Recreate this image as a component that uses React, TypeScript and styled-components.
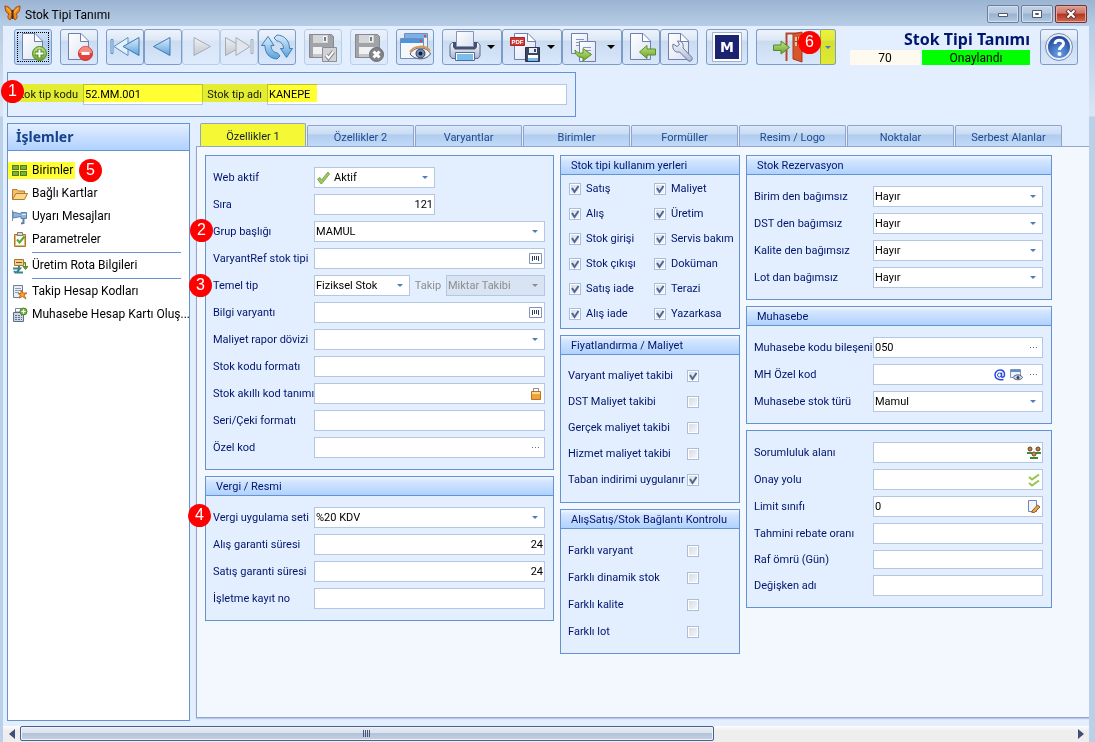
import React, { useId, useState } from 'react';
import styled, { createGlobalStyle, css } from 'styled-components';

const FORM_FONT = 'Roboto, Tahoma, "Noto Sans", sans-serif';
const UI_FONT = 'Roboto, "Segoe UI", sans-serif';
const HEAD_FONT = '"Noto Sans", "Segoe UI", sans-serif';
const LINE = '#6593cf';
const FIELD_LINE = '#b3c7e1';
const NAVY = '#00156e';

const GlobalStyle = createGlobalStyle`
  * { box-sizing: border-box; }
  body { margin: 0; background: #bcd2ea; }
  button, input, select { font: inherit; color: inherit; }
`;

/* ---------- window frame ---------- */

const Window = styled.div`
  display: flex;
  flex-direction: column;
  min-height: 100vh;
  font: 11px/14px ${FORM_FONT};
  color: ${NAVY};
  background: linear-gradient(#9ab4d3 0, #b6cce5 26px, #d9e6f5 116px, #bad0e9 117px);
`;

const TitleBar = styled.header`
  display: flex;
  align-items: center;
  height: 26px;
  padding: 0 8px 0 4px;
  background: linear-gradient(#9bb4d2, #b7cde6);
`;

const WindowTitle = styled.h1`
  flex: 1;
  margin: 3px 0 0 4px;
  font: 400 12px/16px ${UI_FONT};
  color: #000;
`;

const Controls = styled.div`
  display: flex;
  gap: 2px;
  margin-top: 2px;
`;

const ControlButton = styled.button<{ $close?: boolean }>`
  display: flex;
  align-items: center;
  justify-content: center;
  width: 32px;
  height: 18px;
  padding: 0;
  border: 1px solid ${p => (p.$close ? '#7a2f30' : '#6a7f9c')};
  border-radius: 2px;
  box-shadow: inset 0 0 0 1px ${p => (p.$close ? '#e3a79f' : '#d3dfee')};
  background: ${p =>
    p.$close
      ? 'linear-gradient(#dc9f96 0, #cf7468 45%, #b5321f 50%, #cf6a50 100%)'
      : 'linear-gradient(#c3d3e6 0, #b3c6de 45%, #98b1cf 50%, #b4cae4 100%)'};
`;

const Client = styled.div`
  display: flex;
  flex: 1;
  flex-direction: column;
  margin: 0 6px 0 3px;
  background: #e3eeff;
`;

/* ---------- toolbar ---------- */

const Toolbar = styled.div`
  display: flex;
  align-items: flex-start;
  gap: 8px;
  padding: 3px 11px 7px;
`;

const ButtonGroup = styled.div`
  display: flex;
`;

const ToolButton = styled.button<{ $width?: number; $active?: boolean }>`
  display: flex;
  align-items: center;
  justify-content: center;
  width: ${p => p.$width ?? 38}px;
  height: 36px;
  padding: 0;
  border: 1px solid #7d9dc9;
  border-radius: 3px;
  background: ${p =>
    p.$active
      ? 'linear-gradient(#cfe2f8 0, #c3d9f3 30%, #aecbec 34%, #c2dcf8 100%)'
      : 'linear-gradient(#edf3fb 0, #dde8f5 30%, #cbdbef 32%, #d8e7fb 100%)'};
  &:disabled {
    border-color: #b9cde8;
    background: linear-gradient(#e9f1fc 0, #e1ebf9 30%, #d8e5f6 32%, #deebfd 100%);
  }
`;

const FocusRing = styled.span`
  display: flex;
  align-items: center;
  justify-content: center;
  width: 32px;
  height: 30px;
  outline: 1px dotted #000;
  outline-offset: -1px;
`;

const MenuArrow = styled.span`
  width: 0;
  margin-left: 6px;
  border: 4px solid transparent;
  border-top-color: #000;
  border-bottom: 0;
`;

const ExitSplit = styled.div`
  position: relative;
  display: flex;
`;

const ExitMain = styled(ToolButton)`
  width: 64px;
  border-right: 0;
  border-radius: 3px 0 0 3px;
`;

const ExitMenu = styled(ToolButton)`
  width: 16px;
  border-left-color: #a3a93a;
  border-radius: 0 3px 3px 0;
  background: linear-gradient(#edf23a 0, #e2e93a 30%, #d5df32 32%, #dfea34 100%);
`;

const Status = styled.div`
  display: flex;
  flex: 0 1 180px;
  flex-direction: column;
  margin: 0 2px 0 auto;
  font: 12px/16px ${UI_FONT};
  color: #000;
  text-align: center;
`;

const StatusTitle = styled.strong`
  height: 21px;
  font: 700 16px/21px ${HEAD_FONT};
  color: ${NAVY};
  text-align: right;
  white-space: nowrap;
`;

const StatusRow = styled.div`
  display: grid;
  grid-template-columns: 70fr 108fr;
  gap: 2px;
`;

const StatusCell = styled.span<{ $bg: string }>`
  height: 15px;
  background: ${p => p.$bg};
`;

/* ---------- numbered markers ---------- */

const Marker = styled.span<{ $x: number; $y: number }>`
  position: absolute;
  z-index: 2;
  left: ${p => p.$x}px;
  top: ${p => p.$y}px;
  width: 23px;
  height: 23px;
  border-radius: 50%;
  font: 16px/22px "Liberation Sans", Arial, sans-serif;
  color: #fff;
  text-align: center;
  background: #f00;
`;

/* ---------- record header ---------- */

const RecordHeader = styled.section`
  position: relative;
  display: flex;
  align-items: center;
  width: 52%;
  min-width: 569px;
  height: 45px;
  margin: 0 0 6px 4px;
  padding: 0 8px 0 6px;
  border: 1px solid ${LINE};
`;

const RecordLabel = styled.label<{ $width: number }>`
  flex: 0 0 ${p => p.$width}px;
  padding-right: 5px;
  color: #1a1a1a;
  text-align: right;
  white-space: nowrap;
`;

const Highlight = styled.span`
  position: absolute;
  left: 6px;
  top: 11px;
  width: 303px;
  height: 18px;
  background: #ffff33;
  mix-blend-mode: multiply;
  pointer-events: none;
`;

/* ---------- sidebar ---------- */

const Main = styled.main`
  display: flex;
  flex: 1;
  gap: 6px;
  padding: 0 0 5px 4px;
`;

const Sidebar = styled.nav`
  flex: 0 0 183px;
  min-width: 0;
  border: 1px solid ${LINE};
  background: #fff;
`;

const SidebarTitle = styled.h2`
  height: 27px;
  margin: 0 0 8px;
  padding-left: 8px;
  border-bottom: 1px solid ${LINE};
  font: 700 14px/26px ${HEAD_FONT};
  color: #15428b;
  background: linear-gradient(#e3efff, #c9dfff 50%, #afd2ff);
`;

const SidebarList = styled.ul`
  margin: 0;
  padding: 0;
  list-style: none;
`;

const SidebarItem = styled.li<{ $ruled?: boolean }>`
  position: relative;
  height: ${p => (p.$ruled ? 26 : 23)}px;
  ${p =>
    p.$ruled &&
    css`
      &::after {
        content: '';
        display: block;
        height: 1px;
        margin: 0 8px 0 24px;
        background: ${LINE};
      }
    `}
`;

const SidebarLink = styled.a<{ $marked?: boolean }>`
  display: inline-flex;
  align-items: center;
  gap: 4px;
  height: 17px;
  margin: 3px 0;
  padding: 0 2px 0 4px;
  font: 12px/19px ${UI_FONT};
  color: #000;
  text-decoration: none;
  white-space: nowrap;
  background: ${p => (p.$marked ? '#ffff33' : 'none')};
`;

/* ---------- tabs ---------- */

const TabArea = styled.div`
  display: flex;
  flex: 1;
  flex-direction: column;
  min-width: 0;
  margin-bottom: 3px;
`;

const TabStrip = styled.div`
  display: flex;
  align-items: flex-end;
  gap: 1px;
  height: 23px;
  padding-left: 4px;
`;

const Tab = styled.button<{ $selected: boolean }>`
  flex: 0 1 ${p => (p.$selected ? 106 : 107)}px;
  min-width: 0;
  height: ${p => (p.$selected ? 23 : 21)}px;
  padding: 3px 0 0;
  border: 1px solid #8fa3cc;
  border-bottom: 0;
  border-radius: 2px 2px 0 0;
  color: ${p => (p.$selected ? '#10202c' : '#1f4a8c')};
  white-space: nowrap;
  background: ${p =>
    p.$selected
      ? '#f4f835'
      : 'linear-gradient(#dbe8f8 0, #c9dcf3 40%, #b0ccee 45%, #c0daf9 100%)'};
`;

const TabPanel = styled.div`
  display: grid;
  flex: 1;
  grid-template-columns: minmax(0, 349fr) minmax(0, 180fr) minmax(0, 306fr);
  align-items: start;
  gap: 6px;
  padding: 8px 37px 8px 8px;
  border: 1px solid #93a6cf;
  border-right: 0;
  box-shadow: 0 1px 1px #b5cbe9;
  background: #f3f8ff;
`;

const Column = styled.div`
  display: flex;
  flex-direction: column;
  gap: 6px;
`;

const Group = styled.section`
  border: 1px solid ${LINE};
  background: #e3eeff;
`;

const GroupTitle = styled.h3`
  height: 19px;
  margin: 0;
  padding-left: 10px;
  border-bottom: 1px solid ${LINE};
  font: inherit;
  line-height: 19px;
  background: linear-gradient(#f0f6ff 0, #d3e5ff 25%, #b0d2ff 100%);
`;

const Rows = styled.div`
  display: flex;
  flex-direction: column;
  gap: 6px;
  padding: 11px 8px 11px 7px;
`;

const Row = styled.div`
  position: relative;
  display: flex;
  align-items: center;
`;

const RowLabel = styled.label<{ $width: number }>`
  flex: 0 0 ${p => p.$width}px;
  min-width: 0;
  white-space: nowrap;
`;

const InlineLabel = styled.label`
  flex: 0 0 36px;
  text-align: center;
  color: #8d8d8d;
`;

const Field = styled.div<{ $width?: number; $disabled?: boolean; $short?: boolean }>`
  display: flex;
  flex: ${p => (p.$width ? `0 1 ${p.$width}px` : '1')};
  align-items: center;
  min-width: 0;
  height: ${p => (p.$short ? 19 : 21)}px;
  border: 1px solid ${FIELD_LINE};
  color: ${p => (p.$disabled ? '#8d8d8d' : '#000')};
  background: ${p => (p.$disabled ? '#d8e4f3' : '#fff')};
`;

const TextInput = styled.input<{ $right?: boolean }>`
  flex: 1;
  width: 0;
  min-width: 0;
  height: 100%;
  padding: 0 1px;
  border: 0;
  outline: 0;
  text-align: ${p => (p.$right ? 'right' : 'left')};
  background: none;
`;

const Select = styled.select`
  flex: 1;
  min-width: 0;
  width: 0;
  height: 100%;
  padding: 0 1px;
  border: 0;
  outline: 0;
  appearance: none;
  background: none;
  opacity: 1;
`;

const SelectArrow = styled.span<{ $disabled?: boolean }>`
  width: 0;
  margin: 0 6px;
  border: 3px solid transparent;
  border-top-color: ${p => (p.$disabled ? '#8d8d8d' : '#4f7db8')};
  border-bottom: 0;
`;

const IconButton = styled.button`
  display: flex;
  align-items: center;
  justify-content: center;
  width: 17px;
  height: 19px;
  padding: 0;
  border: 0;
  background: none;
`;

const LeadIcon = styled.span`
  display: flex;
  margin: 0 3px 0 2px;
`;

/* ---------- check boxes ---------- */

const CheckGrid = styled.div`
  display: grid;
  grid-template-columns: 85px 1fr;
  gap: 13px 0;
  padding: 8px 4px 8px 8px;
`;

const CheckLabel = styled.label`
  display: flex;
  align-items: center;
  gap: 5px;
  height: 12px;
  white-space: nowrap;
`;

const CheckRows = styled.div<{ $tight?: boolean }>`
  display: flex;
  flex-direction: column;
  gap: 6px;
  padding: ${p => (p.$tight ? '11px 8px 12px 7px' : '11px 8px 11px 7px')};
`;

const CheckRow = styled.label<{ $tight?: boolean }>`
  display: grid;
  grid-template-columns: 119px 12px;
  align-items: center;
  height: ${p => (p.$tight ? 20 : 21)}px;
  white-space: nowrap;
`;

const CheckCell = styled.span`
  display: grid;
  width: 12px;
  height: 12px;
  > * {
    grid-area: 1 / 1;
  }
`;

const CheckInput = styled.input`
  width: 12px;
  height: 12px;
  margin: 0;
  border: 1px solid #a9bedb;
  box-shadow: inset 0 0 0 1px #fff;
  appearance: none;
  background: linear-gradient(135deg, #d5dbe3, #f6f8fa);
  & + svg {
    visibility: hidden;
    pointer-events: none;
  }
  &:checked + svg {
    visibility: visible;
  }
`;

/* ---------- horizontal scroll bar ---------- */

const ScrollBar = styled.div`
  display: flex;
  height: 16px;
  background: linear-gradient(#fdfdfd, #eeeeee 30%);
`;

const ScrollTrack = styled.div`
  flex: 1;
`;

const ScrollButton = styled.button`
  display: flex;
  align-items: center;
  justify-content: center;
  width: 17px;
  height: 16px;
  padding: 0;
  border: 0;
  background: none;
`;

const ScrollThumb = styled.div`
  display: flex;
  align-items: center;
  justify-content: center;
  width: 66%;
  height: 15px;
  border: 1px solid #4b6090;
  border-radius: 2px;
  box-shadow: inset 0 0 0 1px #eef3fa;
  background: linear-gradient(#e6ebf1 0, #dbe3ec 45%, #b4c3d8 50%, #c3d1e4 100%);
`;

/* ---------- drawings ---------- */

const Gradients = () => (
  <svg width="0" height="0" style={{ position: 'absolute' }} aria-hidden="true">
    <defs>
      <linearGradient id="page" x1="0" y1="0" x2="1" y2="1">
        <stop offset="0" stopColor="#fff" />
        <stop offset="1" stopColor="#d9e2f3" />
      </linearGradient>
      <linearGradient id="blue" x1="0" y1="0" x2="0" y2="1">
        <stop offset="0" stopColor="#d9ecfb" />
        <stop offset="0.5" stopColor="#9cc8ec" />
        <stop offset="1" stopColor="#5ba0d8" />
      </linearGradient>
      <linearGradient id="grey" x1="0" y1="0" x2="0" y2="1">
        <stop offset="0" stopColor="#eef0f3" />
        <stop offset="1" stopColor="#c3c8d0" />
      </linearGradient>
      <linearGradient id="green" x1="0" y1="0" x2="0" y2="1">
        <stop offset="0" stopColor="#c4e27f" />
        <stop offset="1" stopColor="#6ba42d" />
      </linearGradient>
      <radialGradient id="help" cx="0.5" cy="0.8" r="0.8">
        <stop offset="0" stopColor="#6aa3ea" />
        <stop offset="1" stopColor="#1b3f98" />
      </radialGradient>
      <linearGradient id="metal" x1="0" y1="0" x2="0" y2="1">
        <stop offset="0" stopColor="#fbfcfe" />
        <stop offset="1" stopColor="#a9b6d0" />
      </linearGradient>
    </defs>
  </svg>
);

const Draw = ({ children, w = 32, h = w }: { children: React.ReactNode; w?: number; h?: number }) => (
  <svg width={w} height={h} viewBox={`0 0 ${w} ${h}`} fill="none" aria-hidden="true">
    {children}
  </svg>
);

const Page = () => (
  <>
    <path d="M5.500 2.500H18L25.500 10V28.500H5.500Z" fill="url(#page)" stroke="#6f7fae" />
    <path d="M17.500 3V10.500H25" fill="#fff" stroke="#6f7fae" />
  </>
);

const NewIcon = () => (
  <Draw>
    <Page />
    <circle cx="22.500" cy="22.500" r="7" fill="url(#green)" stroke="#4b8a1c" />
    <path d="M22.500 18V27M18 22.500H27" stroke="#4b8a1c" strokeWidth="4" />
    <path d="M22.500 18.500V26.500M18.500 22.500H26.500" stroke="#fff" strokeWidth="2" />
  </Draw>
);

const DeleteIcon = () => (
  <Draw>
    <Page />
    <circle cx="22.500" cy="22.500" r="7" fill="#e8403c" stroke="#c8302d" />
    <path d="M16 22a6.500 6.500 0 0 1 13 0Z" fill="#f58a84" />
    <path d="M18.500 22.500H26.500" stroke="#fff" strokeWidth="3" />
  </Draw>
);

const FirstIcon = () => (
  <Draw>
    <path d="M2 8.500H4V22.500H2Z" fill="#cfe5f8" stroke="#5a8fc4" />
    <path d="M19 6.500V24.500L5 15.500Z" fill="#e3f1fc" stroke="#5a8fc4" />
    <path d="M30 6.500V24.500L14 15.500Z" fill="url(#blue)" stroke="#3f78b5" />
  </Draw>
);

const PrevIcon = () => (
  <Draw>
    <path d="M23 6.500V24.500L6.500 15.500Z" fill="url(#blue)" stroke="#3f78b5" />
  </Draw>
);

const NextIcon = () => (
  <Draw>
    <path d="M9 6.500V24.500L25.500 15.500Z" fill="url(#grey)" stroke="#a5acb8" />
  </Draw>
);

const LastIcon = () => (
  <Draw>
    <path d="M2.500 6.500V24.500L18.500 15.500Z" fill="url(#grey)" stroke="#a5acb8" />
    <path d="M13 6.500V24.500L27 15.500Z" fill="#e2e6ec" stroke="#a5acb8" />
    <path d="M28 8.500H30V22.500H28Z" fill="#e8ebf0" stroke="#a5acb8" />
  </Draw>
);

const RefreshIcon = () => (
  <Draw>
    <path
      d="M7 5.500L13 14.500H10C10 18.500 12.500 21.500 16.500 22L19 25L16 28C8 27.500 4 22 4 14.500H0.500Z"
      fill="url(#blue)"
      stroke="#3d7fb8"
    />
    <path
      d="M25.500 26.500L19.500 17.500H22.500C22.500 13.500 20 10.500 16 10L13 7L16 4C24 4.500 28.500 10 28.500 17.500H31.500Z"
      fill="url(#blue)"
      stroke="#3d7fb8"
    />
  </Draw>
);

const Floppy = () => (
  <>
    <path d="M2.500 3.500H24.500L26.500 5.500V26.500H2.500Z" fill="#a0a3a7" stroke="#86898e" />
    <path d="M6 4H21V12H6Z" fill="#d3d5d9" />
    <path d="M16 5H20V11H16Z" fill="#f2f3f4" />
    <path d="M17 6H19V10H17Z" fill="#77797d" />
    <path d="M6 16H23V26H6Z" fill="#f0f1f2" />
    <path d="M6 23H23V26H6Z" fill="#c5c7ca" />
  </>
);

const SaveOkIcon = () => (
  <Draw>
    <Floppy />
    <path d="M15.500 16.500H29.500V30.500H15.500Z" fill="#d0d2d6" stroke="#8b8e93" />
    <path d="M19 24L21.500 27L26.500 20.500" stroke="#85888c" strokeWidth="4" />
    <path d="M19 24L21.500 27L26.500 20.500" stroke="#fff" strokeWidth="2" />
  </Draw>
);

const SaveCancelIcon = () => (
  <Draw>
    <Floppy />
    <circle cx="23.500" cy="23.500" r="7" fill="#818387" stroke="#6b6d71" />
    <path d="M20.500 20.500L26.500 26.500M26.500 20.500L20.500 26.500" stroke="#fff" strokeWidth="3" />
  </Draw>
);

const PreviewIcon = () => (
  <Draw>
    <path d="M5.500 2.500H28.500V22.500H5.500Z" fill="#eaf0f8" stroke="#6f8fc0" />
    <path d="M6 3H28V7H6Z" fill="#7db0e6" />
    <path d="M25 4H27V6H25Z" fill="#e0452f" />
    <path d="M1.500 7.500H24.500V27.500H1.500Z" fill="#f4f7fc" stroke="#6f8fc0" />
    <path d="M2 8H24V12H2Z" fill="#4f93da" />
    <path d="M21 9H23V11H21Z" fill="#e0452f" />
    <path d="M11 23C15 15 28 15 31.500 23C27 29.500 16 29.500 11 23Z" fill="#f2f3f7" stroke="#515a78" />
    <path d="M11 21C15 14 27 14 31 20" stroke="#d99a4a" strokeWidth="2" />
    <circle cx="21.500" cy="22.500" r="4.500" fill="#6f8cb5" stroke="#2f3b5c" />
    <circle cx="21.500" cy="22.500" r="2" fill="#151b30" />
  </Draw>
);

const PrinterIcon = () => (
  <Draw>
    <path d="M3 11.500H29L31 14V25L29 27.500H3L1 25V14Z" fill="url(#metal)" stroke="#596a94" />
    <path d="M4 11H28V16L26 18.500H6L4 16Z" fill="#45506f" />
    <path d="M7.500 0.500H24.500V15.500H7.500Z" fill="url(#page)" stroke="#8794b8" />
    <path d="M6.500 21.500H25.500V29.500H6.500Z" fill="#fff" stroke="#596a94" />
    <path d="M8 23H24V29H8Z" fill="#78bdec" />
  </Draw>
);

const PdfIcon = () => (
  <Draw>
    <path d="M5.500 2.500H19L26.500 10V28.500H5.500Z" fill="url(#page)" stroke="#6f7fae" />
    <path d="M18.500 3V10.500H26" fill="#fff" stroke="#6f7fae" />
    <path d="M1.500 6.500H15.500V14.500H1.500Z" fill="#cf3a36" stroke="#a92825" />
    <text x="8.500" y="13" fontSize="6" fontWeight="700" fill="#fff" textAnchor="middle" fontFamily="Liberation Sans">
      PDF
    </text>
    <path d="M16.500 16.500H30.500V30.500H16.500Z" fill="#3b4566" stroke="#2a3250" />
    <path d="M20 17H28V22H20Z" fill="#e8edf6" />
    <path d="M25 18H27V21H25Z" fill="#3b4566" />
    <path d="M19 24H29V30H19Z" fill="#fff" />
    <path d="M19 27H29V30H19Z" fill="#77b9ea" />
  </Draw>
);

const CopyIcon = () => (
  <Draw>
    <path d="M2.500 2.500H18.500V22.500H2.500Z" fill="url(#page)" stroke="#6f7fae" />
    <path d="M7 8.500H15M7 11.500H13M7 14.500H11" stroke="#8196c4" />
    <path d="M10.500 10.500H26.500V30.500H10.500Z" fill="url(#page)" stroke="#6f7fae" />
    <path d="M14 16.500H22M14 19.500H22M16 22.500H22" stroke="#8196c4" />
    <path
      d="M6 19C8 22 11 22.500 14 22V17.500L22.500 23.500L14 30V26.500C9 26.500 6 23.500 6 19Z"
      fill="url(#green)"
      stroke="#5b8c28"
    />
  </Draw>
);

const ImportIcon = () => (
  <Draw>
    <Page />
    <path d="M14.500 21L22 14.500V18H30.500V24H22V27.500Z" fill="url(#green)" stroke="#5b8c28" />
  </Draw>
);

const WrenchIcon = () => (
  <Draw>
    <Page />
    <path
      d="M10 13L14 15.500L16.500 13.500L14.500 10C19 10 21 13 20 17L29 26.500C30 29 27.500 31 25.500 30L16.500 21C12 22 9 18.500 10 13Z"
      fill="url(#metal)"
      stroke="#68779b"
    />
  </Draw>
);

const MIcon = () => (
  <Draw>
    <path d="M1.500 1.500H30.500V30.500H1.500Z" fill="#fff" stroke="#9fb0cf" />
    <path d="M4 4H28V28H4Z" fill="#1a2470" />
    <text x="16" y="21" fontSize="14" fontWeight="700" fill="#fff" textAnchor="middle" fontFamily="DejaVu Sans">
      M
    </text>
  </Draw>
);

const ExitIcon = () => (
  <Draw>
    <path d="M13.500 30V2.500H28" stroke="#b5482c" strokeWidth="2" />
    <path d="M20 3L29 1V31L20 28Z" fill="#d9552d" stroke="#a63b1c" />
    <path d="M22 6H27V15H22Z" fill="#e9c7a8" />
    <path d="M24.500 6V15M22 10.500H27" stroke="#a63b1c" />
    <path d="M0.500 14H8V10L16.500 16.500L8 23V19.500H0.500Z" fill="url(#green)" stroke="#4f8a2c" />
  </Draw>
);

const HelpIcon = () => (
  <Draw>
    <circle cx="16" cy="16" r="13.500" fill="#e8eefa" stroke="#7389b8" />
    <circle cx="16" cy="16" r="11" fill="url(#help)" />
    <path d="M12 13C12 8 20.500 8 20.500 12.500C20.500 15.500 16.500 15.500 16.500 19" stroke="#fff" strokeWidth="3" />
    <circle cx="16.500" cy="23" r="2" fill="#fff" />
  </Draw>
);

const ButterflyIcon = () => (
  <Draw w={17} h={16}>
    <path d="M1 1C5 1 8 5 8.500 8C9 5 12 1 16 1C16 5 15 8 12 9C14 11 13 14 11 15L8.500 10L6 15C4 14 3 11 5 9C2 8 1 5 1 1Z" fill="#f08a1c" stroke="#9c4a12" />
    <path d="M8.500 5V14" stroke="#4a2a18" strokeWidth="2" />
    <path d="M3 3L7 8M14 3L10 8" stroke="#ffc25a" />
  </Draw>
);

const UnitsIcon = () => (
  <Draw w={16}>
    {[3, 9].map(y =>
      [1, 9].map(x => (
        <rect key={`${x}-${y}`} x={x - 0.5} y={y - 0.5} width="6" height="4" fill="#7fb03f" stroke="#4e7d20" />
      ))
    )}
  </Draw>
);

const FolderIcon = () => (
  <Draw w={16}>
    <path d="M0.500 13.500V3.500H5L6.500 5H12.500V7" fill="#f0c070" stroke="#b57a2a" />
    <path d="M0.500 13.500L4 7.500H15.500L12.500 13.500Z" fill="#fbd78e" stroke="#b57a2a" />
  </Draw>
);

const HornIcon = () => (
  <Draw w={16}>
    <path d="M0.500 1V12" stroke="#8a95a8" />
    <path d="M1 3L9 5V3.500H14.500V9.500H9V7.500L1 9Z" fill="#8db5e0" stroke="#5f7fa8" />
    <path d="M10 5.500H14" stroke="#dcebfa" />
    <path d="M11.500 10V14L9 14.500" stroke="#5f7fa8" strokeWidth="2" />
  </Draw>
);

const ClipboardIcon = () => (
  <Draw w={16}>
    <path d="M2.500 2.500H13.500V14.500H2.500Z" fill="#e3b873" stroke="#a8762f" />
    <path d="M4 4H12V13H4Z" fill="#f7f9fb" />
    <path d="M5.500 0.500H10.500V3.500H5.500Z" fill="#d5dae0" stroke="#8a7a5c" />
    <path d="M5 7.500L7.500 10.500L12.500 4.500" stroke="#5aa82a" strokeWidth="2" />
  </Draw>
);

const RouteIcon = () => (
  <Draw w={16}>
    <path d="M2.500 1.500H11.500V7.500H2.500Z" fill="#f3cf8d" stroke="#a8762f" />
    <path d="M4 4.500H10" stroke="#7b5a20" />
    <path d="M12 4.500H13.500V9M11 8.500H16L13.500 11.500Z" fill="#6ba42d" stroke="#4f8a22" />
    <path d="M1 10.500H8L4.500 14.500H11M2 13L4 15M7 8V12" stroke="#3b8592" strokeWidth="2" />
  </Draw>
);

const NoteStarIcon = () => (
  <Draw w={16}>
    <path d="M1.500 1.500H10.500V11.500L8.500 13.500H1.500Z" fill="#e9eef6" stroke="#6d7c99" />
    <path d="M3 4.500H9M3 6.500H9M3 8.500H7" stroke="#8e9db8" />
    <path d="M9 6L11 9L15 9L12 11L14 15L10.500 12.500L7 14L8.500 11L6 9.500H9Z" fill="#f3a23a" stroke="#c46a1a" />
  </Draw>
);

const CalcIcon = () => (
  <Draw w={16}>
    <path d="M3.500 1.500H9.500V5H3.500Z" fill="#fff" stroke="#7b879d" />
    <path d="M1.500 5.500H11.500V14.500H1.500Z" fill="#cdd8e6" stroke="#5d6d8b" />
    <path d="M3 8.500H10M3 10.500H10M3 12.500H10" stroke="#5d6d8b" strokeDasharray="2 1" />
    <circle cx="11.500" cy="4.500" r="3.500" fill="#83b94b" stroke="#4e7d20" />
    <path d="M11.500 2.500V6.500M9.500 4.500H13.500" stroke="#fff" />
  </Draw>
);

const ActiveIcon = () => (
  <Draw w={13} h={13}>
    <path d="M0.500 8L3 6.500L4.500 9L11 1L12.500 3L5 12.500H3.500Z" fill="#9acb5a" stroke="#7da85a" />
  </Draw>
);

const ListIcon = () => (
  <Draw w={13} h={11}>
    <path d="M0.500 0.500H12.500V10.500H0.500Z" fill="#fff" stroke="#7f93bb" />
    <path d="M3.500 3V8M5.500 3V7M7.500 3V7M9.500 3V8" stroke="#2f3d5c" />
  </Draw>
);

const LockIcon = () => (
  <Draw w={10} h={13}>
    <path d="M2.500 5V1.500H7.500V5" stroke="#8290a8" />
    <path d="M0.500 4.500H9.500V12.500H0.500Z" fill="#f0a336" stroke="#b8741c" />
    <path d="M1 5H9V7H1Z" fill="#fbd995" />
  </Draw>
);

const DotsIcon = () => (
  <Draw w={8} h={3}>
    <path d="M0 1.500H1M3 1.500H4M6 1.500H7" stroke="#4f6f9f" />
  </Draw>
);

const AtIcon = () => (
  <Draw w={12} h={12}>
    <circle cx="5.500" cy="6" r="2" stroke="#2a4be0" strokeWidth="1" />
    <path
      d="M7.500 3.500V7C7.500 9 10.500 8.500 10.500 5.500C10.500 2.500 8.500 1 6 1C3 1 1 3.500 1 6C1 9.500 4.500 11.500 9.500 10.500"
      stroke="#2a4be0"
      strokeWidth="1.500"
    />
  </Draw>
);

const WindowEyeIcon = () => (
  <Draw w={13} h={12}>
    <path d="M0.500 0.500H10.500V8.500H0.500Z" fill="#eef3fa" stroke="#7f93bb" />
    <path d="M1 1H10V3H1Z" fill="#5b8fcd" />
    <path d="M3 8.500C5 5 11 5 12.500 8.500C11 11.500 5 11.500 3 8.500Z" fill="#cfd6e4" stroke="#4a5878" />
    <circle cx="8" cy="8.500" r="1.500" fill="#33405f" />
  </Draw>
);

const PeopleIcon = () => (
  <Draw w={14} h={13}>
    <path d="M0 6H5V8H0ZM9 6H14V8H9ZM3 11H11V13H3Z" fill="#3d8a35" />
    <circle cx="3" cy="3" r="2" fill="#b9804f" stroke="#6b3f1f" />
    <circle cx="11" cy="3" r="2" fill="#b9804f" stroke="#6b3f1f" />
    <circle cx="7" cy="8" r="2" fill="#c98d58" stroke="#6b3f1f" />
  </Draw>
);

const ApproveIcon = () => (
  <Draw w={12} h={14}>
    <path d="M1 4L4 6.500L11 1.500M1 10L4 12.500L11 7.500" stroke="#97c44c" strokeWidth="2" />
  </Draw>
);

const EditIcon = () => (
  <Draw w={12} h={13}>
    <path d="M0.500 0.500H8.500V11.500H0.500Z" fill="#f1f5fc" stroke="#6f86b8" />
    <path d="M4 11L9.500 5L12 7L6.500 12.500L4 13Z" fill="#e9a24c" stroke="#8d5b23" />
  </Draw>
);

/* ---------- form parts ---------- */

type InputProps = {
  label: string;
  labelWidth: number;
  value?: string;
  right?: boolean;
  width?: number;
  short?: boolean;
  icons?: [string, React.ReactNode][];
};

const InputRow = ({ label, labelWidth, value = '', right, width, short, icons = [] }: InputProps) => {
  const id = useId();
  return (
    <Row>
      <RowLabel htmlFor={id} $width={labelWidth}>{label}</RowLabel>
      <Field $width={width} $short={short}>
        <TextInput id={id} defaultValue={value} $right={right} />
        {icons.map(([name, icon]) => (
          <IconButton key={name} type="button" aria-label={name}>{icon}</IconButton>
        ))}
      </Field>
    </Row>
  );
};

type SelectFieldProps = {
  id: string;
  value?: string;
  width?: number;
  disabled?: boolean;
  lead?: React.ReactNode;
};

const SelectField = ({ id, value = '', width, disabled, lead }: SelectFieldProps) => (
  <Field $width={width} $disabled={disabled}>
    {lead && <LeadIcon>{lead}</LeadIcon>}
    <Select id={id} disabled={disabled} defaultValue={value}>
      <option>{value}</option>
    </Select>
    <SelectArrow $disabled={disabled} />
  </Field>
);

type SelectRowProps = Omit<SelectFieldProps, 'id'> & {
  label: string;
  labelWidth: number;
  marker?: React.ReactNode;
};

const SelectRow = ({ label, labelWidth, marker, ...field }: SelectRowProps) => {
  const id = useId();
  return (
    <Row>
      {marker}
      <RowLabel htmlFor={id} $width={labelWidth}>{label}</RowLabel>
      <SelectField id={id} {...field} />
    </Row>
  );
};

const CheckBox = ({ checked }: { checked?: boolean }) => (
  <CheckCell>
    <CheckInput type="checkbox" defaultChecked={checked} />
    <Draw w={12}>
      <path d="M3 5L5.500 9L9.500 3" stroke="#4b6797" strokeWidth="2" />
    </Draw>
  </CheckCell>
);

const usage = [
  'Satış', 'Maliyet', 'Alış', 'Üretim', 'Stok girişi', 'Servis bakım',
  'Stok çıkışı', 'Doküman', 'Satış iade', 'Terazi', 'Alış iade', 'Yazarkasa',
];

const pricing: [string, boolean][] = [
  ['Varyant maliyet takibi', true],
  ['DST Maliyet takibi', false],
  ['Gerçek maliyet takibi', false],
  ['Hizmet maliyet takibi', false],
  ['Taban indirimi uygulanır', true],
];

const tabs = ['Özellikler 1', 'Özellikler 2', 'Varyantlar', 'Birimler', 'Formüller', 'Resim / Logo', 'Noktalar', 'Serbest Alanlar'];

const actions: { text: string; icon: React.ReactNode; ruled?: boolean }[] = [
  { text: 'Birimler', icon: <UnitsIcon /> },
  { text: 'Bağlı Kartlar', icon: <FolderIcon /> },
  { text: 'Uyarı Mesajları', icon: <HornIcon /> },
  { text: 'Parametreler', icon: <ClipboardIcon />, ruled: true },
  { text: 'Üretim Rota Bilgileri', icon: <RouteIcon />, ruled: true },
  { text: 'Takip Hesap Kodları', icon: <NoteStarIcon /> },
  { text: 'Muhasebe Hesap Kartı Oluş...', icon: <CalcIcon /> },
];

export default function App() {
  const [tab, setTab] = useState(0);
  const L = 101;
  const R = 119;
  return (
    <Window>
      <GlobalStyle />
      <Gradients />
      <TitleBar>
        <ButterflyIcon />
        <WindowTitle>Stok Tipi Tanımı</WindowTitle>
        <Controls>
          <ControlButton aria-label="Simge durumuna küçült">
            <Draw w={12} h={10}><path d="M1.500 4.500H10.500V7.500H1.500Z" fill="#fff" stroke="#4b5a70" /></Draw>
          </ControlButton>
          <ControlButton aria-label="Ekranı kapla">
            <Draw w={12} h={10}>
              <path d="M1.500 1.500H10.500V8.500H1.500Z" fill="#fff" stroke="#4b5a70" />
              <path d="M4.500 4.500H7.500V5.500H4.500Z" stroke="#4b5a70" />
            </Draw>
          </ControlButton>
          <ControlButton $close aria-label="Kapat">
            <Draw w={12} h={10}>
              <path d="M2 1L10 9M10 1L2 9" stroke="#5b3a3a" strokeWidth="4" />
              <path d="M2.500 1.500L9.500 8.500M9.500 1.500L2.500 8.500" stroke="#fff" strokeWidth="2" />
            </Draw>
          </ControlButton>
        </Controls>
      </TitleBar>

      <Client>
        <Toolbar>
          <ToolButton $active aria-label="Yeni"><FocusRing><NewIcon /></FocusRing></ToolButton>
          <ToolButton aria-label="Sil"><DeleteIcon /></ToolButton>
          <ButtonGroup>
            <ToolButton aria-label="İlk"><FirstIcon /></ToolButton>
            <ToolButton aria-label="Önceki"><PrevIcon /></ToolButton>
            <ToolButton disabled aria-label="Sonraki"><NextIcon /></ToolButton>
            <ToolButton disabled aria-label="Son"><LastIcon /></ToolButton>
            <ToolButton aria-label="Yenile"><RefreshIcon /></ToolButton>
          </ButtonGroup>
          <ToolButton disabled aria-label="Kaydet"><SaveOkIcon /></ToolButton>
          <ToolButton disabled aria-label="Vazgeç"><SaveCancelIcon /></ToolButton>
          <ToolButton aria-label="Önizle"><PreviewIcon /></ToolButton>
          <ButtonGroup>
            <ToolButton $width={60} aria-label="Yazdır"><PrinterIcon /><MenuArrow /></ToolButton>
            <ToolButton $width={60} aria-label="PDF"><PdfIcon /><MenuArrow /></ToolButton>
            <ToolButton $width={60} aria-label="Kopyala"><CopyIcon /><MenuArrow /></ToolButton>
            <ToolButton aria-label="İçe aktar"><ImportIcon /></ToolButton>
            <ToolButton aria-label="Araçlar"><WrenchIcon /></ToolButton>
          </ButtonGroup>
          <ToolButton $width={42} aria-label="M"><MIcon /></ToolButton>
          <ExitSplit>
            <ExitMain aria-label="Çıkış"><ExitIcon /></ExitMain>
            <ExitMenu aria-label="Çıkış seçenekleri"><SelectArrow /></ExitMenu>
            <Marker $x={42} $y={2}>6</Marker>
          </ExitSplit>
          <Status>
            <StatusTitle>Stok Tipi Tanımı</StatusTitle>
            <StatusRow>
              <StatusCell $bg="#fffaf0">70</StatusCell>
              <StatusCell $bg="#00ff00">Onaylandı</StatusCell>
            </StatusRow>
          </Status>
          <ToolButton aria-label="Yardım"><HelpIcon /></ToolButton>
        </Toolbar>

        <RecordHeader>
          <RecordLabel htmlFor="code" $width={69}>Stok tip kodu</RecordLabel>
          <Field $width={120}><TextInput id="code" defaultValue="52.MM.001" /></Field>
          <RecordLabel htmlFor="name" $width={64}>Stok tip adı</RecordLabel>
          <Field><TextInput id="name" defaultValue="KANEPE" /></Field>
          <Highlight />
          <Marker $x={-7} $y={7}>1</Marker>
        </RecordHeader>

        <Main>
          <Sidebar>
            <SidebarTitle>İşlemler</SidebarTitle>
            <SidebarList>
              {actions.map((a, i) => (
                <SidebarItem key={a.text} $ruled={a.ruled}>
                  <SidebarLink href="#" $marked={i === 0}>{a.icon}{a.text}</SidebarLink>
                  {i === 0 && <Marker $x={71} $y={0}>5</Marker>}
                </SidebarItem>
              ))}
            </SidebarList>
          </Sidebar>

          <TabArea>
            <TabStrip role="tablist">
              {tabs.map((t, i) => (
                <Tab key={t} role="tab" aria-selected={i === tab} $selected={i === tab} onClick={() => setTab(i)}>
                  {t}
                </Tab>
              ))}
            </TabStrip>
            <TabPanel role="tabpanel">
              <Column>
                <Group>
                  <Rows>
                    <SelectRow label="Web aktif" labelWidth={L} value="Aktif" width={121} lead={<ActiveIcon />} />
                    <InputRow label="Sıra" labelWidth={L} value="121" right width={121} />
                    <SelectRow label="Grup başlığı" labelWidth={L} value="MAMUL" marker={<Marker $x={-23} $y={-2}>2</Marker>} />
                    <InputRow label="VaryantRef stok tipi" labelWidth={L} icons={[['Liste', <ListIcon />]]} />
                    <Row>
                      <Marker $x={-24} $y={-1}>3</Marker>
                      <RowLabel htmlFor="base" $width={L}>Temel tip</RowLabel>
                      <SelectField id="base" value="Fiziksel Stok" width={96} />
                      <InlineLabel htmlFor="track">Takip</InlineLabel>
                      <SelectField id="track" value="Miktar Takibi" disabled />
                    </Row>
                    <InputRow label="Bilgi varyantı" labelWidth={L} icons={[['Liste', <ListIcon />]]} />
                    <SelectRow label="Maliyet rapor dövizi" labelWidth={L} />
                    <InputRow label="Stok kodu formatı" labelWidth={L} />
                    <InputRow label="Stok akıllı kod tanımı" labelWidth={L} icons={[['Kilit', <LockIcon />]]} />
                    <InputRow label="Seri/Çeki formatı" labelWidth={L} />
                    <InputRow label="Özel kod" labelWidth={L} icons={[['Seç', <DotsIcon />]]} />
                  </Rows>
                </Group>
                <Group>
                  <GroupTitle>Vergi / Resmi</GroupTitle>
                  <Rows>
                    <SelectRow label="Vergi uygulama seti" labelWidth={L} value="%20 KDV" marker={<Marker $x={-25} $y={-3}>4</Marker>} />
                    <InputRow label="Alış garanti süresi" labelWidth={L} value="24" right />
                    <InputRow label="Satış garanti süresi" labelWidth={L} value="24" right />
                    <InputRow label="İşletme kayıt no" labelWidth={L} />
                  </Rows>
                </Group>
              </Column>

              <Column>
                <Group>
                  <GroupTitle>Stok tipi kullanım yerleri</GroupTitle>
                  <CheckGrid>
                    {usage.map(u => (
                      <CheckLabel key={u}><CheckBox checked />{u}</CheckLabel>
                    ))}
                  </CheckGrid>
                </Group>
                <Group>
                  <GroupTitle>Fiyatlandırma / Maliyet</GroupTitle>
                  <CheckRows $tight>
                    {pricing.map(([text, on]) => (
                      <CheckRow key={text} $tight>{text}<CheckBox checked={on} /></CheckRow>
                    ))}
                  </CheckRows>
                </Group>
                <Group>
                  <GroupTitle>AlışSatış/Stok Bağlantı Kontrolu</GroupTitle>
                  <CheckRows>
                    {['Farklı varyant', 'Farklı dinamik stok', 'Farklı kalite', 'Farklı lot'].map(text => (
                      <CheckRow key={text}>{text}<CheckBox /></CheckRow>
                    ))}
                  </CheckRows>
                </Group>
              </Column>

              <Column>
                <Group>
                  <GroupTitle>Stok Rezervasyon</GroupTitle>
                  <Rows>
                    {['Birim den bağımsız', 'DST den bağımsız', 'Kalite den bağımsız', 'Lot dan bağımsız'].map(text => (
                      <SelectRow key={text} label={text} labelWidth={R} value="Hayır" />
                    ))}
                  </Rows>
                </Group>
                <Group>
                  <GroupTitle>Muhasebe</GroupTitle>
                  <Rows>
                    <InputRow label="Muhasebe kodu bileşeni" labelWidth={R} value="050" icons={[['Seç', <DotsIcon />]]} />
                    <InputRow
                      label="MH Özel kod"
                      labelWidth={R}
                      icons={[['Adres', <AtIcon />], ['Göster', <WindowEyeIcon />], ['Seç', <DotsIcon />]]}
                    />
                    <SelectRow label="Muhasebe stok türü" labelWidth={R} value="Mamul" />
                  </Rows>
                </Group>
                <Group>
                  <Rows>
                    <InputRow label="Sorumluluk alanı" labelWidth={R} icons={[['Kişiler', <PeopleIcon />]]} />
                    <InputRow label="Onay yolu" labelWidth={R} icons={[['Onay', <ApproveIcon />]]} />
                    <InputRow label="Limit sınıfı" labelWidth={R} value="0" icons={[['Düzenle', <EditIcon />]]} />
                    <InputRow label="Tahmini rebate oranı" labelWidth={R} />
                    <InputRow label="Raf ömrü (Gün)" labelWidth={R} short />
                    <InputRow label="Değişken adı" labelWidth={R} />
                  </Rows>
                </Group>
              </Column>
            </TabPanel>
          </TabArea>
        </Main>

        <ScrollBar>
          <ScrollButton aria-label="Sola kaydır">
            <Draw w={6} h={10}><path d="M6 0V10L0 5Z" fill="#3f4f78" /></Draw>
          </ScrollButton>
          <ScrollTrack>
            <ScrollThumb>
              <Draw w={8} h={7}><path d="M0.500 0V7M2.500 0V7M4.500 0V7M6.500 0V7" stroke="#44557c" /></Draw>
            </ScrollThumb>
          </ScrollTrack>
          <ScrollButton aria-label="Sağa kaydır">
            <Draw w={6} h={10}><path d="M0 0V10L6 5Z" fill="#3f4f78" /></Draw>
          </ScrollButton>
        </ScrollBar>
      </Client>
    </Window>
  );
}
